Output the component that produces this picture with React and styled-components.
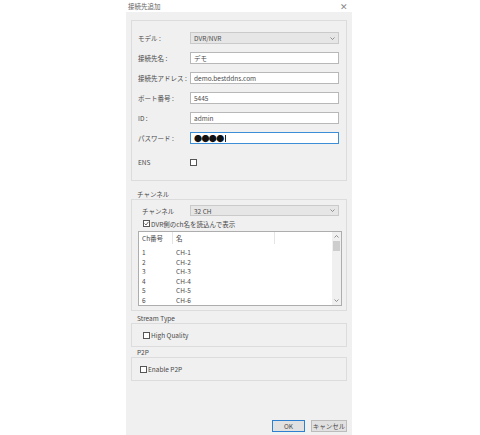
import React from 'react'
import styled, { createGlobalStyle } from 'styled-components'

const GlobalStyle = createGlobalStyle`
  body {
    margin: 0;
    background: #fff;
    font-family: "Noto Sans CJK JP", "Noto Sans", sans-serif;
    color: #4a4a4a;
  }
`

const Dialog = styled.div`
  margin-left: 126px;
  width: 226px;
  height: 435px;
  display: flex;
  flex-direction: column;
`

const TitleBar = styled.div`
  height: 12px;
  background: #fff;
  display: flex;
  align-items: center;
  justify-content: space-between;
  padding: 0 4px 0 2px;
  font-size: 6.5px;
  color: #666;
`

const Close = styled.span`
  font-size: 9px;
  color: #888;
  line-height: 1;
`

const Body = styled.div`
  flex: 1;
  background: #f0f0f0;
  padding: 8px 5px 3px;
  display: flex;
  flex-direction: column;
`

const GroupBox = styled.div`
  border: 1px solid #dcdcdc;
  display: flex;
  flex-direction: column;
  padding: ${p => p.$pad};
  gap: ${p => p.$gap || '0px'};
`

const SectionTitle = styled.div`
  height: 9px;
  line-height: 9px;
  font-size: 6.5px;
  padding-left: 6px;
  margin-top: ${p => p.$top};
`

const FormRow = styled.div`
  display: grid;
  grid-template-columns: ${p => p.$label || '52px'} 149px;
  align-items: center;
  height: ${p => p.$h || '12px'};
  margin-top: ${p => p.$top || '0px'};
  padding-left: ${p => p.$left || '0px'};
  font-size: 6.5px;
`

const TextBox = styled.div`
  height: 12px;
  box-sizing: border-box;
  background: #fff;
  border: 1px solid ${p => (p.$focus ? '#3c8fd6' : '#b8b8b8')};
  display: flex;
  align-items: center;
  padding-left: 3px;
  font-size: 6.5px;
  color: #4a4a4a;
`

const Select = styled(TextBox)`
  background: #e6e6e6;
  border-color: #cacaca;
  justify-content: space-between;
  padding-right: 3px;
  height: ${p => p.$h || '12px'};
`

const Bullets = styled.span`
  font-size: 8px;
  color: #111;
  letter-spacing: -0.6px;
`

const Caret = styled.span`
  width: 1px;
  height: 7px;
  background: #222;
  margin-left: 1px;
`

const Box = styled.span`
  width: 7px;
  height: 7px;
  box-sizing: border-box;
  border: 1px solid #555;
  background: #fff;
  display: inline-flex;
  align-items: center;
  justify-content: center;
  flex-shrink: 0;
`

const CheckRow = styled.label`
  display: flex;
  align-items: center;
  gap: 1px;
  font-size: 6.5px;
  height: ${p => p.$h || '10px'};
  padding-left: ${p => p.$left || '0px'};
`

const ListBox = styled.div`
  margin: 0 4px 0 6px;
  height: 75px;
  box-sizing: border-box;
  border: 1px solid #adadad;
  background: #fff;
  display: flex;
  font-size: 6.5px;
`

const ListMain = styled.div`
  flex: 1;
  display: flex;
  flex-direction: column;
`

const ListHeader = styled.div`
  display: grid;
  grid-template-columns: 34px 102px 1fr;
  height: 12px;
  margin-bottom: 3px;
  align-items: stretch;
`

const HeadCell = styled.div`
  display: flex;
  align-items: center;
  padding-left: 3px;
  border-right: ${p => (p.$last ? 'none' : '1px solid #e5e5e5')};
`

const ListRow = styled.div`
  display: grid;
  grid-template-columns: 34px 1fr;
  height: 9.6px;
  align-items: center;
  padding-left: 3px;
`

const ScrollBar = styled.div`
  width: 9px;
  background: #f0f0f0;
  display: flex;
  flex-direction: column;
  align-items: center;
`

const Arrow = styled.div`
  height: 9px;
  display: flex;
  align-items: center;
  justify-content: center;
  margin-top: ${p => (p.$bottom ? 'auto' : '0px')};
`

const Thumb = styled.div`
  width: 7px;
  height: 10px;
  background: #cdcdcd;
`

const ButtonBar = styled.div`
  margin-top: auto;
  display: flex;
  justify-content: flex-end;
  gap: 6px;
`

const Button = styled.div`
  width: ${p => p.$w};
  height: 12px;
  box-sizing: border-box;
  background: #e1e1e1;
  border: 1px solid ${p => (p.$primary ? '#2f7fd0' : '#bcbcbc')};
  display: flex;
  align-items: center;
  justify-content: center;
  font-size: 6.5px;
  color: #4a4a4a;
`

function Chevron ({ up }) {
  return (
    <svg width='5' height='3' viewBox='0 0 5 3'>
      <polyline
        points={up ? '0.5,2.5 2.5,0.5 4.5,2.5' : '0.5,0.5 2.5,2.5 4.5,0.5'}
        fill='none'
        stroke='#777'
        strokeWidth='0.8'
      />
    </svg>
  )
}

function CheckBox ({ checked }) {
  return (
    <Box>
      {checked && (
        <svg width='5' height='5' viewBox='0 0 5 5'>
          <polyline points='0.5,2.5 2,4 4.5,0.8' fill='none' stroke='#444' strokeWidth='0.8' />
        </svg>
      )}
    </Box>
  )
}

const channels = [1, 2, 3, 4, 5, 6]

function App () {
  return (
    <>
      <GlobalStyle />
      <Dialog>
        <TitleBar>
          <span>接続先追加</span>
          <Close>✕</Close>
        </TitleBar>
        <Body>
          <GroupBox $pad='11px 0 12px 6px' $gap='8px'>
            <FormRow>
              <span>モデル :</span>
              <Select>DVR/NVR<Chevron /></Select>
            </FormRow>
            <FormRow>
              <span>接続先名 :</span>
              <TextBox>デモ</TextBox>
            </FormRow>
            <FormRow>
              <span>接続先アドレス :</span>
              <TextBox>demo.bestddns.com</TextBox>
            </FormRow>
            <FormRow>
              <span>ポート番号 :</span>
              <TextBox>5445</TextBox>
            </FormRow>
            <FormRow>
              <span>ID :</span>
              <TextBox>admin</TextBox>
            </FormRow>
            <FormRow>
              <span>パスワード :</span>
              <TextBox $focus>
                <Bullets>●●●●</Bullets>
                <Caret />
              </TextBox>
            </FormRow>
            <FormRow $top='4px'>
              <span>ENS</span>
              <CheckBox />
            </FormRow>
          </GroupBox>

          <SectionTitle $top='9px'>チャンネル</SectionTitle>
          <GroupBox $pad='5px 0 4px 0' $gap='2px'>
            <FormRow $label='48px' $h='11px' $left='10px'>
              <span>チャンネル</span>
              <Select $h='11px'>32 CH<Chevron /></Select>
            </FormRow>
            <CheckRow $left='11px' $h='11px'>
              <CheckBox checked />
              DVR側のch名を読込んで表示
            </CheckRow>
            <ListBox>
              <ListMain>
                <ListHeader>
                  <HeadCell>Ch番号</HeadCell>
                  <HeadCell>名</HeadCell>
                  <HeadCell $last />
                </ListHeader>
                {channels.map(n => (
                  <ListRow key={n}>
                    <span>{n}</span>
                    <span>CH-{n}</span>
                  </ListRow>
                ))}
              </ListMain>
              <ScrollBar>
                <Arrow><Chevron up /></Arrow>
                <Thumb />
                <Arrow $bottom><Chevron /></Arrow>
              </ScrollBar>
            </ListBox>
          </GroupBox>

          <SectionTitle $top='3px'>Stream Type</SectionTitle>
          <GroupBox $pad='6px 0 6px 11px'>
            <CheckRow>
              <CheckBox />
              High Quality
            </CheckRow>
          </GroupBox>

          <SectionTitle $top='1px'>P2P</SectionTitle>
          <GroupBox $pad='6px 0 6px 8px'>
            <CheckRow>
              <CheckBox />
              Enable P2P
            </CheckRow>
          </GroupBox>

          <ButtonBar>
            <Button $primary $w='33px'>OK</Button>
            <Button $w='36px'>キャンセル</Button>
          </ButtonBar>
        </Body>
      </Dialog>
    </>
  )
}

export default App
